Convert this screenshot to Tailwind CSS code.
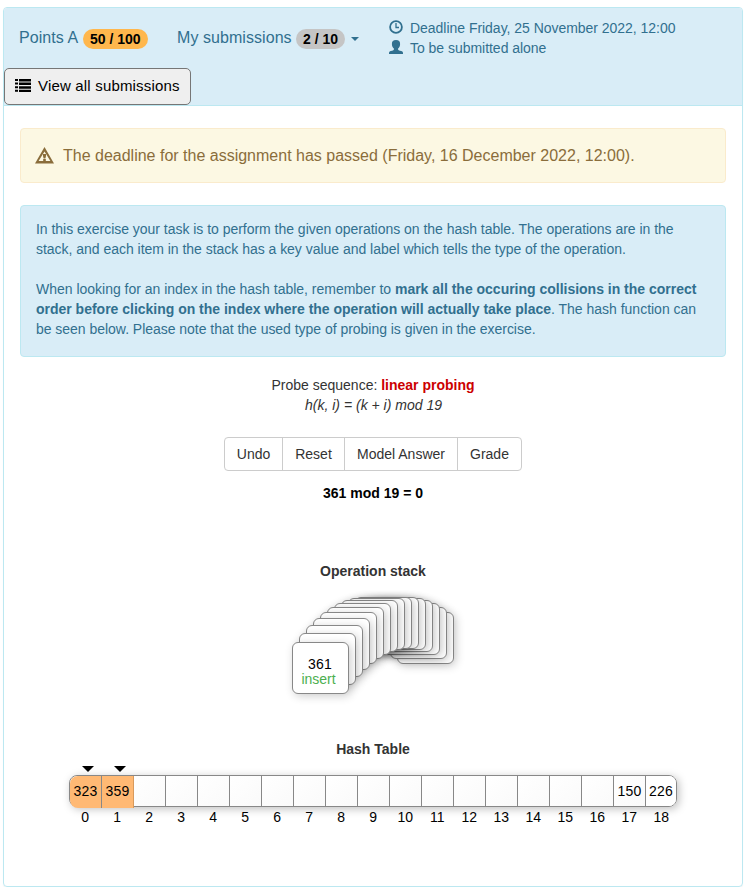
<!DOCTYPE html>
<html lang="en">
<head>
<meta charset="utf-8">
<title>Hash table exercise</title>
<script src="https://cdn.jsdelivr.net/npm/@tailwindcss/browser@4"></script>
</head>
<body class="bg-white font-['Liberation_Sans',Arial,sans-serif] text-sm leading-5 text-[#333]">
<main class="ml-[3px] mt-[7px] w-[740px] h-[880px] border border-[#bce8f1] rounded shadow-[0_1px_1px_rgba(0,0,0,0.05)]">
  <header class="h-[98px] bg-[#d9edf7] border-b border-[#bce8f1] rounded-t-[3px] text-[#31708f]">
    <div class="flex h-[60px]">
      <div class="w-[158px] pl-[15px] pt-[19px] text-base leading-[22px] whitespace-nowrap"><span class="tracking-[0.08px]">Points A</span> <span class="inline-block h-5 w-[65px] rounded-full bg-[#ffb74d] text-center text-sm leading-5 font-bold text-black align-[-1px]">50 / 100</span></div>
      <div class="w-[227px] pl-[15px] pt-[19px] text-base leading-[22px] whitespace-nowrap"><span class="tracking-[0.06px]">My submissions</span> <span class="inline-block h-5 w-[49px] rounded-full bg-[#c5c5c5] text-center text-sm leading-5 font-bold text-black align-[-1px]">2 / 10</span><svg class="inline-block ml-[6px] align-[2px]" width="8" height="4" viewBox="0 0 8 4"><path d="M0 0h8L4 4z" fill="#31708f"/></svg></div>
      <div class="pt-[10px]">
        <div class="flex h-5"><svg class="mt-[2px] mr-[7px]" width="14" height="14" viewBox="0 0 14 14" fill="none" stroke="#31708f"><circle cx="7" cy="7" r="5.9" stroke-width="1.8"/><path d="M7 3v4.5h3" stroke-width="1.3"/></svg><span class="tracking-[-0.03px]">Deadline Friday, 25 November 2022, 12:00</span></div>
        <div class="flex h-5"><svg class="mt-[2px] mr-[7px]" width="14" height="14" viewBox="0 0 14 14" fill="#31708f"><path d="M7 0C4.200 0 2.800 1.600 2.900 4c0 2 .8 3.700 2 4.600v1c0 .5-.4.700-1 .9L1 11.300c-.7.3-1 .9-1 1.600V14h14v-1.100c0-.7-.3-1.300-1-1.600l-2.900-.8c-.6-.2-1-.4-1-.9v-1c1.200-.9 2-2.600 2-4.600C11.200 1.600 9.800 0 7 0z"/></svg><span class="tracking-[-0.03px]">To be submitted alone</span></div>
      </div>
    </div>
    <button class="flex items-center w-[187px] h-[37px] pl-[10px] pb-px border border-[#767676] rounded-[5px] bg-[#efefef] text-[15px] tracking-[0.18px] text-black whitespace-nowrap"><svg class="mr-[7px] -mt-px" width="16" height="13" viewBox="0 0 16 13" fill="#000"><path d="M0 0h3v2H0zM4 0h12v2.500H4zM0 3.600h3v2H0zM4 3.600h12v2.500H4zM0 7.200h3v2H0zM4 7.200h12v2.500H4zM0 10.800h3v2H0zM4 10.800h12v2.200H4z"/></svg>View all submissions</button>
  </header>

  <div class="px-4 pt-[22px]">
    <div class="flex items-center h-[55px] w-[706px] pl-[14px] border border-[#faebcc] rounded bg-[#fcf8e3] text-base text-[#8a6d3b]">
      <svg class="mr-[9px]" width="19" height="17" viewBox="0 0 19 17"><path fill="#8a6d3b" fill-rule="evenodd" d="M9.500 0 0 16.500h19zM9.500 4.500 15.400 14H3.600z"/><path fill="#8a6d3b" d="M8 7h3v2l-.6 2.500H8.600L8 9zM8.200 12.100h2.600V14H8.200z"/></svg><span>The deadline for the assignment has passed (Friday, 16 December 2022, 12:00).</span>
    </div>
    <div class="mt-[22px] w-[706px] h-[152px] px-[15px] py-[13px] border border-[#bce8f1] rounded bg-[#d9edf7] text-[#31708f] whitespace-nowrap">
      <p class="tracking-[-0.025px]">In this exercise your task is to perform the given operations on the hash table. The operations are in the<br>stack, and each item in the stack has a key value and label which tells the type of the operation.</p>
      <p class="mt-5 tracking-[-0.01px]">When looking for an index in the hash table, remember to <b>mark all the occuring collisions in the correct<br>order before clicking on the index where the operation will actually take place</b>. The hash function can<br><span class="tracking-[-0.03px]">be seen below. Please note that the used type of probing is given in the exercise.</span></p>
    </div>
    <div class="mt-[18px] w-[706px] text-center">
      <p>Probe sequence: <b class="text-[#c00]">linear probing</b></p>
      <p class="italic pl-px">h(k, i) = (k + i) mod 19</p>
      <div class="mt-[22px] mx-auto flex w-[298px] h-[34px] border border-[#ccc] rounded divide-x divide-[#ccc]">
        <button class="w-[58px]">Undo</button><button class="w-[62px]">Reset</button><button class="w-[113px] whitespace-nowrap">Model Answer</button><button class="flex-1">Grade</button>
      </div>
      <p class="mt-3 font-bold text-black">361 mod 19 = 0</p>
      <p class="mt-[58px] font-bold">Operation stack</p>
      <div id="stack" class="relative mt-4 ml-[272px] h-[97px] w-[162px] text-black"></div>
      <p class="mt-[45px] font-bold">Hash Table</p>
    </div>
    <div class="mt-[7px] ml-[49px] flex h-[5px]">
      <svg class="ml-[13px]" width="12" height="6" viewBox="0 0 12 6"><path d="M0 0h12L6 6z"/></svg>
      <svg class="ml-5" width="12" height="6" viewBox="0 0 12 6"><path d="M0 0h12L6 6z"/></svg>
    </div>
    <div id="cells" class="mt-1 ml-[49px] flex w-[608px] h-8 border border-[#888] rounded-lg shadow-[2px_2px_8px_rgba(0,0,0,0.25)] text-black"></div>
    <div id="indices" class="ml-[49px] flex w-[608px] text-center text-black"></div>
  </div>
</main>
<script>
  const tops = [45, 36, 28, 21, 15, 10, 6, 3, 1, 0, 0, 1, 3, 6, 10, 15];
  const stack = document.getElementById('stack');
  for (let i = tops.length - 1; i >= 0; i--) {
    const card = document.createElement('div');
    card.className = 'absolute w-[57px] h-[52px] border border-[#888] rounded-md bg-white shadow-[2px_2px_10px_rgba(0,0,0,0.2)] leading-[15px] pt-[14px] pr-1';
    card.style.left = i * 7 + 'px';
    card.style.top = tops[i] + 'px';
    if (i === 0) card.innerHTML = '<span class="pl-[3px] tracking-[0.2px]">361</span><br><span class="text-[#4caf50]">insert</span>';
    stack.append(card);
  }
  const keys = { 0: 323, 1: 359, 17: 150, 18: 226 };
  for (let i = 0; i < 19; i++) {
    const cell = document.createElement('div');
    cell.className = i === 0
      ? 'w-8 h-8 shrink-0 border-r border-[#888] rounded-l-lg bg-[#ffb974] text-center leading-[30px] tracking-[0.2px]'
      : i === 1
        ? 'w-8 h-8 shrink-0 border-r border-[#d99a5c] bg-[#ffb974] text-center leading-[30px] tracking-[0.2px]'
        : i < 18
          ? 'w-8 shrink-0 border-r border-[#888] bg-linear-to-br from-white to-[#fafafa] text-center leading-[30px] tracking-[0.2px]'
          : 'w-[30px] shrink-0 rounded-r-[7px] bg-white text-center leading-[30px] tracking-[0.2px]';
    cell.textContent = keys[i] ?? '';
    document.getElementById('cells').append(cell);
    const index = document.createElement('span');
    index.className = 'w-8 shrink-0 pl-[0.5px]';
    index.textContent = i;
    document.getElementById('indices').append(index);
  }
</script>
</body>
</html>
